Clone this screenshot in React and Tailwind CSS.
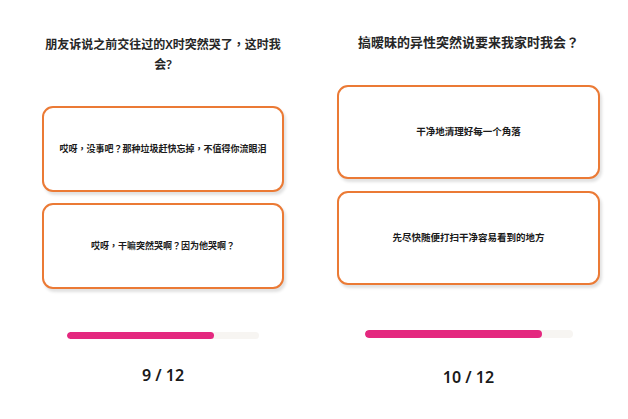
import React from 'react';

const screens = [
  {
    question: '朋友诉说之前交往过的X时突然哭了，这时我会?',
    answers: ['哎呀，没事吧？那种垃圾赶快忘掉，不值得你流眼泪', '哎呀，干嘛突然哭啊？因为他哭啊？'],
    current: 9,
    total: 12,
    fill: 147,
    layout: {
      wrap: 'ml-[42px] w-[242px] pt-[35px]',
      title: 'text-[12px] leading-[20px]',
      cards: 'mt-[31px] gap-[11px]',
      card: 'h-[86px]',
      answer: 'text-[9px]',
      bar: 'mt-[43px] w-[192px] h-[7px]',
      count: 'mt-[26px]',
    },
  },
  {
    question: '搞暧昧的异性突然说要来我家时我会？',
    answers: ['干净地清理好每一个角落', '先尽快随便打扫干净容易看到的地方'],
    current: 10,
    total: 12,
    fill: 177,
    layout: {
      wrap: 'ml-[53px] w-[263px] pt-[32px]',
      title: 'text-[13px] leading-[20px]',
      cards: 'mt-[33px] gap-[12px]',
      card: 'h-[94px]',
      answer: 'text-[9.5px]',
      bar: 'mt-[45px] w-[208px] h-[8px]',
      count: 'mt-[29px]',
    },
  },
];

function QuizScreen({ screen }) {
  const l = screen.layout;
  return (
    <div className={`flex flex-col items-center shrink-0 ${l.wrap}`}>
      {/* Question */}
      <h2 className={`w-full text-center font-semibold text-[#262626] ${l.title}`}>
        {screen.question}
      </h2>

      {/* Answers */}
      <div className={`w-full flex flex-col ${l.cards}`}>
        {screen.answers.map((answer, index) => (
          <div
            key={index}
            className={`flex items-center justify-center bg-white border-2 border-[#eb7a35] rounded-[11px] shadow-[2px_3px_3px_rgba(0,0,0,0.12)] ${l.card}`}
          >
            <span className={`font-bold text-[#1a1a1a] ${l.answer}`}>{answer}</span>
          </div>
        ))}
      </div>

      {/* Progress */}
      <div className={`rounded-full bg-[#f7f5f2] overflow-hidden ${l.bar}`}>
        <div className="h-full rounded-full bg-[#e4287f]" style={{ width: screen.fill }} />
      </div>

      <div className={`text-[16px] leading-[20px] font-semibold text-[#1a1a1a] font-['Noto_Sans',sans-serif] ${l.count}`}>
        {screen.current} / {screen.total}
      </div>
    </div>
  );
}

export default function App() {
  return (
    <div className="w-[628px] h-[419px] bg-white flex font-['Noto_Sans','Noto_Sans_CJK_TC',sans-serif] overflow-hidden">
      {screens.map((screen, index) => (
        <QuizScreen key={index} screen={screen} />
      ))}
    </div>
  );
}
